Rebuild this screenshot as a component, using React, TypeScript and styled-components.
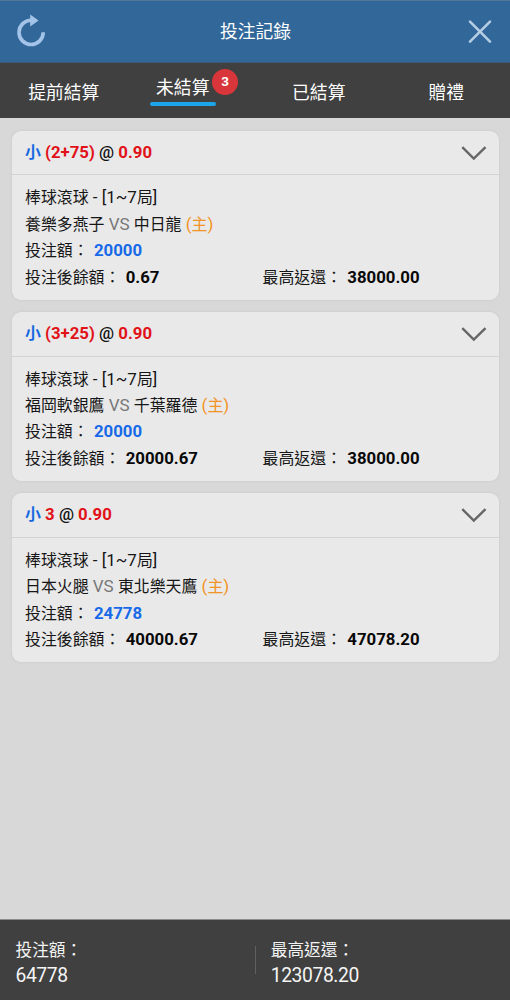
import React from 'react';
import styled, { createGlobalStyle } from 'styled-components';

const GlobalStyle = createGlobalStyle`
  * { box-sizing: border-box; }
  body {
    margin: 0;
    background: #d8d8d8;
    font-family: Roboto, "Noto Sans CJK TC", sans-serif;
  }
`;

const Page = styled.div`
  display: flex;
  flex-direction: column;
  width: 510px;
  height: 1000px;
  background: #d8d8d8;
`;

const TopBar = styled.header`
  display: flex;
  align-items: center;
  justify-content: space-between;
  height: 63px;
  flex: none;
  padding: 0 15px 0 14px;
  background: #326799;
  border-top: 1px solid #4f7797;
  border-bottom: 1px solid #3d5a78;
`;

const Title = styled.h1`
  margin: 0;
  padding-right: 2px;
  font-size: 17.8px;
  font-weight: 400;
  line-height: 26px;
  color: #fff;
`;

const IconButton = styled.button`
  display: flex;
  padding: 0;
  border: 0;
  background: none;
`;

const Tabs = styled.nav`
  display: grid;
  grid-template-columns: repeat(4, 1fr);
  flex: none;
  height: 55px;
  background: #404040;
`;

const Tab = styled.div<{ $active?: boolean }>`
  display: flex;
  flex-direction: column;
  align-items: center;
  padding-top: ${(p) => (p.$active ? 12 : 16.5)}px;
  padding-right: ${(p) => (p.$active ? 17 : 0)}px;
  font-size: 17.8px;
  line-height: 26px;
  color: #fff;
`;

const TabLabel = styled.span`
  position: relative;
`;

const Underline = styled.span`
  width: 66px;
  height: 4px;
  margin-top: 1px;
  border-radius: 2px;
  background: #1ca5e8;
`;

const Badge = styled.span`
  position: absolute;
  left: 56px;
  top: -6px;
  width: 26px;
  height: 26px;
  border-radius: 50%;
  background: #d8363a;
  font-size: 13.5px;
  font-weight: 700;
  line-height: 24px;
  text-align: center;
`;

const List = styled.main`
  display: flex;
  flex-direction: column;
  flex: 1;
  gap: 12.4px;
  padding: 13px 11.5px 0 12px;
`;

const Card = styled.article`
  height: 168.8px;
  border-radius: 9px;
  background: #e9e9e9;
  box-shadow: 0 0 2px 1px #d0d0d0;
`;

const CardHead = styled.div`
  display: flex;
  align-items: center;
  justify-content: space-between;
  height: 44.4px;
  padding: 0 12px 0.3px 13px;
  border-bottom: 1px solid #d3d3d3;
`;

const Pick = styled.div`
  font-size: 16.8px;
  font-weight: 700;
  line-height: 24px;
  color: #111;
  white-space: pre;
`;

const Side = styled.span`
  font-size: 15.9px;
  color: #1769e0;
`;

const Red = styled.span`
  color: #e11218;
`;

const At = styled.span`
  font-weight: 500;
`;

const CardBody = styled.div`
  padding: 9.1px 13px 0;
`;

const Row = styled.div`
  display: flex;
  height: 26.4px;
  font-size: 15.9px;
  line-height: 26.4px;
  color: #161616;
  white-space: pre;
`;

const Cell = styled.div`
  flex: none;
  width: 237.5px;
`;

const Latin = styled.span`
  font-size: 17px;
`;

const Versus = styled(Latin)`
  color: #777;
`;

const Home = styled.span`
  color: #f29325;
`;

const Amount = styled.b<{ $blue?: boolean }>`
  font-size: 16.8px;
  font-weight: 700;
  margin-left: 5.4px;
  color: ${(p) => (p.$blue ? '#1769e8' : '#080808')};
`;

const Footer = styled.footer`
  display: flex;
  flex: none;
  align-items: center;
  height: 81px;
  padding-left: 15.5px;
  border-top: 1px solid #8b8b8b;
  background: #404040;
  color: #f4f4f4;
`;

const Total = styled.div`
  width: 240px;
  padding-top: 6px;
`;

const TotalLabel = styled.div`
  font-size: 16.7px;
  line-height: 25px;
`;

const TotalValue = styled.div`
  font-size: 19.3px;
  letter-spacing: -0.4px;
  line-height: 25px;
`;

const Divider = styled.div`
  width: 1px;
  height: 28px;
  margin-right: 15px;
  background: #606060;
`;

const bets = [
  { line: '(2+75)', odds: '0.90', away: '養樂多燕子', home: '中日龍', stake: '20000', balance: '0.67', payout: '38000.00' },
  { line: '(3+25)', odds: '0.90', away: '福岡軟銀鷹', home: '千葉羅德', stake: '20000', balance: '20000.67', payout: '38000.00' },
  { line: '3', odds: '0.90', away: '日本火腿', home: '東北樂天鷹', stake: '24778', balance: '40000.67', payout: '47078.20' },
];

export default function App() {
  return (
    <Page>
      <GlobalStyle />
      <TopBar>
        <IconButton aria-label="refresh">
          <svg width="34" height="36" viewBox="0 0 34 36" fill="none">
            <path d="M29.2 18.2A12.1 12.1 0 1 1 17.5 6.3" stroke="#a3c4e8" strokeWidth="3.6" />
            <path d="M16.2 0.6L24.6 6.6L16.2 12.4Z" fill="#a3c4e8" />
          </svg>
        </IconButton>
        <Title>投注記錄</Title>
        <IconButton aria-label="close">
          <svg width="30" height="30" viewBox="0 0 30 30" fill="none" stroke="#b4cce4" strokeWidth="2.6" strokeLinecap="round">
            <path d="M5 4.7L25 24.7M25 4.7L5 24.7" />
          </svg>
        </IconButton>
      </TopBar>
      <Tabs>
        <Tab>提前結算</Tab>
        <Tab $active>
          <TabLabel>
            未結算
            <Badge>3</Badge>
          </TabLabel>
          <Underline />
        </Tab>
        <Tab>已結算</Tab>
        <Tab>贈禮</Tab>
      </Tabs>
      <List>
        {bets.map((b) => (
          <Card key={b.line}>
            <CardHead>
              <Pick>
                <Side>小</Side> <Red>{b.line}</Red> <At>@</At> <Red>{b.odds}</Red>
              </Pick>
              <svg width="26" height="16" viewBox="0 0 26 16" fill="none" stroke="#666" strokeWidth="2.4">
                <path d="M1.3 2.2L12.8 13.6L24.5 2.2" />
              </svg>
            </CardHead>
            <CardBody>
              <Row>
                <span>棒球滾球<Latin> - [1~7</Latin>局<Latin>]</Latin></span>
              </Row>
              <Row>
                <span>
                  {b.away}<Versus> VS </Versus>{b.home}<Home><Latin> (</Latin>主<Latin>)</Latin></Home>
                </span>
              </Row>
              <Row>
                <span>投注額：<Amount $blue>{b.stake}</Amount></span>
              </Row>
              <Row>
                <Cell>投注後餘額：<Amount>{b.balance}</Amount></Cell>
                <Cell>最高返還：<Amount>{b.payout}</Amount></Cell>
              </Row>
            </CardBody>
          </Card>
        ))}
      </List>
      <Footer>
        <Total>
          <TotalLabel>投注額：</TotalLabel>
          <TotalValue>64778</TotalValue>
        </Total>
        <Divider />
        <Total>
          <TotalLabel>最高返還：</TotalLabel>
          <TotalValue>123078.20</TotalValue>
        </Total>
      </Footer>
    </Page>
  );
}
